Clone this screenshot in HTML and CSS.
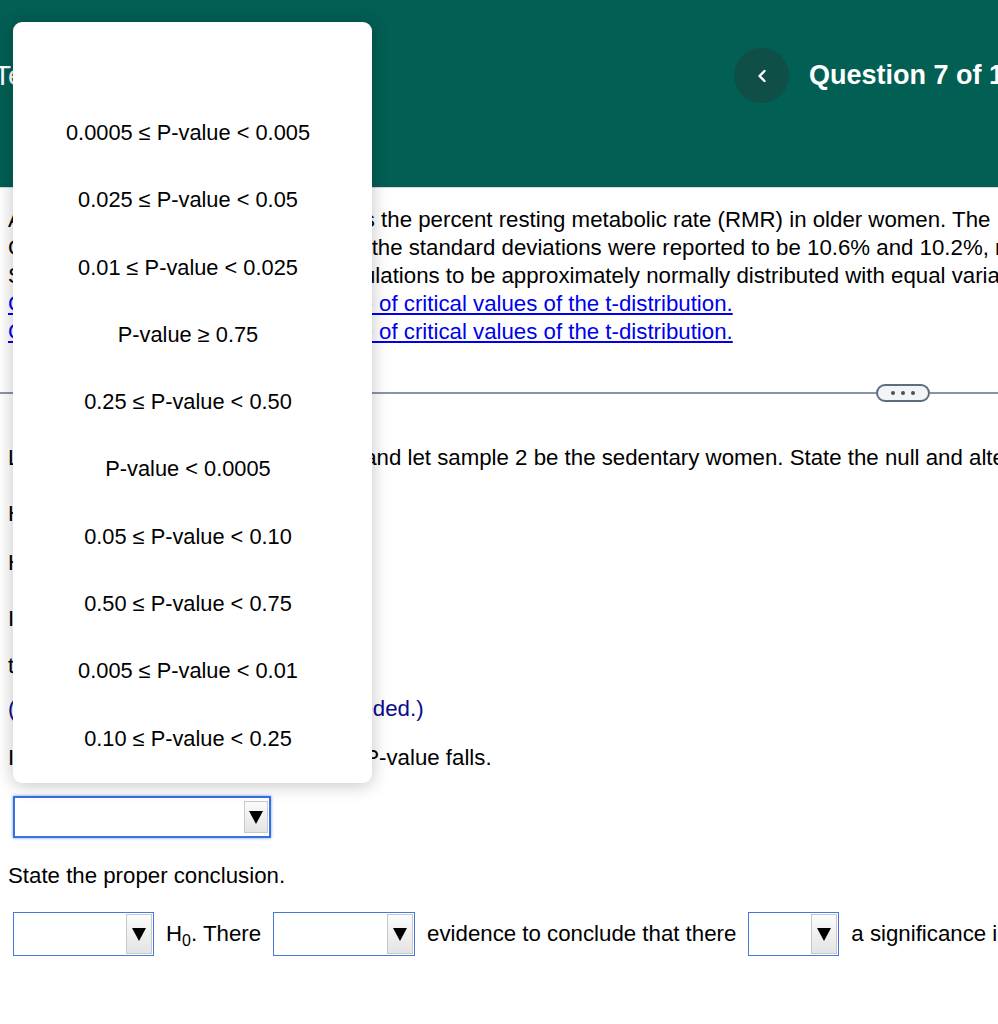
FILE: index.html
```html
<!DOCTYPE html>
<html lang="en">
<head>
<meta charset="utf-8">
<title>Question 7</title>
<link rel="stylesheet" href="styles.css">
</head>
<body>
<div class="page">
  <header class="topbar">
    <div class="title">Test Review</div>
    <nav class="qnav">
      <span class="back">
        <svg width="12" height="14" viewBox="0 0 12 14"><polyline points="8.5,2 3.5,7 8.5,12" fill="none" stroke="#fff" stroke-width="2.4" stroke-linecap="round" stroke-linejoin="round"/></svg>
      </span>
      <h1 class="qtitle">Question 7 of 10</h1>
    </nav>
  </header>

  <main class="content">
    <div class="prompt">
      <div class="line">A study looked at how training affects the percent resting metabolic rate (RMR) in older women. The</div>
      <div class="line">Group sizes were 14 and 12, and so the standard deviations were reported to be 10.6% and 10.2%, respectively.</div>
      <div class="line">Samples are small. Assume the populations to be approximately normally distributed with equal variances.</div>
      <div class="line"><a class="link" href="#">Click here to view page 1 of the table of critical values of the t-distribution.</a></div>
      <div class="line"><a class="link" href="#">Click here to view page 2 of the table of critical values of the t-distribution.</a></div>
    </div>

    <div class="divider">
      <span class="rule rule-left"></span>
      <span class="more"><i></i><i></i><i></i></span>
      <span class="rule rule-right"></span>
    </div>

    <div class="work">
      <div class="line">Let sample 1 be the active females, and let sample 2 be the sedentary women. State the null and alternative hypotheses.</div>
      <div class="line r-28">H<sub>0</sub>: μ<sub>1</sub> = μ<sub>2</sub></div>
      <div class="line r-21">H<sub>1</sub>: μ<sub>1</sub> ≠ μ<sub>2</sub></div>
      <div class="line r-28">Identify the test statistic.</div>
      <div class="line r-19">t = 1.31</div>
      <div class="line r-15 note">(Round to two decimal places as needed.)</div>
      <div class="line r-21">Identify the table range in which the P-value falls.</div>
      <div class="r-24">
        <span class="dd dd-focus"><span class="dd-btn"><span class="tri"></span></span></span>
      </div>
      <div class="line r-24">State the proper conclusion.</div>
      <div class="answer">
        <span class="dd dd-w140"><span class="dd-btn"><span class="tri"></span></span></span>
        <span>H<sub>0</sub>. There</span>
        <span class="dd dd-w141"><span class="dd-btn"><span class="tri"></span></span></span>
        <span>evidence to conclude that there</span>
        <span class="dd dd-w92"><span class="dd-btn"><span class="tri"></span></span></span>
        <span>a significance in the percent resting metabolic rate.</span>
      </div>
    </div>
  </main>

  <ul class="listbox">
    <li class="opt"></li>
    <li class="opt">0.0005 ≤ P-value &lt; 0.005</li>
    <li class="opt">0.025 ≤ P-value &lt; 0.05</li>
    <li class="opt">0.01 ≤ P-value &lt; 0.025</li>
    <li class="opt">P-value ≥ 0.75</li>
    <li class="opt">0.25 ≤ P-value &lt; 0.50</li>
    <li class="opt">P-value &lt; 0.0005</li>
    <li class="opt">0.05 ≤ P-value &lt; 0.10</li>
    <li class="opt">0.50 ≤ P-value &lt; 0.75</li>
    <li class="opt">0.005 ≤ P-value &lt; 0.01</li>
    <li class="opt">0.10 ≤ P-value &lt; 0.25</li>
  </ul>
</div>
</body>
</html>
```

FILE: styles.css
```css
html, body {
  margin: 0;
  padding: 0;
  background: #fff;
  overflow: hidden;
}
body {
  font-family: "Liberation Sans", Arial, sans-serif;
  color: #000;
}
.page {
  position: relative;
  width: 1400px;
  min-height: 1024px;
}

/* header */
.topbar {
  height: 188px;
  box-sizing: border-box;
  background: #025f54;
  border-bottom: 1px solid #d6d9d8;
  padding-top: 48px;
  display: flex;
  align-items: flex-start;
  color: #fff;
}
.title {
  flex: 0 0 740px;
  margin-left: -6px;
  font-size: 28px;
  line-height: 55px;
  white-space: nowrap;
}
.qnav {
  display: flex;
  align-items: center;
  gap: 20px;
}
.back {
  width: 55px;
  height: 55px;
  border-radius: 50%;
  background: #0f4f48;
  display: flex;
  align-items: center;
  justify-content: center;
}
.back svg { display: block; }
.qtitle {
  margin: 0;
  font-size: 27px;
  font-weight: bold;
  line-height: 55px;
  white-space: nowrap;
}

/* content */
.content {
  padding: 18px 0 0 8px;
  font-size: 22.25px;
}
.line {
  line-height: 28px;
  white-space: nowrap;
}
.link {
  color: #0000ee;
  text-decoration: underline;
}
.note { color: #0a0a8a; }
sub { font-size: 0.72em; line-height: 0; }

.divider {
  margin: 38px 0 0 -8px;
  height: 18px;
  display: flex;
  align-items: center;
}
.rule {
  height: 2px;
  background: #8995a4;
}
.rule-left { flex: 0 0 876px; }
.rule-right { flex: 1 1 auto; }
.more {
  box-sizing: border-box;
  width: 54px;
  height: 18px;
  border: 2px solid #5c6d7f;
  border-radius: 9px;
  background: #f2f4f6;
  display: flex;
  align-items: center;
  justify-content: center;
  gap: 6px;
}
.more i {
  width: 4px;
  height: 4px;
  border-radius: 50%;
  background: #4b5158;
}

.work { margin-top: 42px; }
.r-28 { margin-top: 28px; }
.r-21 { margin-top: 21px; }
.r-19 { margin-top: 19px; }
.r-15 { margin-top: 15px; }
.r-24 { margin-top: 24px; }

/* dropdowns */
.dd {
  box-sizing: border-box;
  display: inline-flex;
  justify-content: flex-end;
  height: 44px;
  padding: 1px;
  border: 1px solid #4677dc;
  background: #fff;
  vertical-align: middle;
}
.dd-btn {
  box-sizing: border-box;
  width: 26px;
  height: 100%;
  border: 1px solid #c9c9c9;
  background: linear-gradient(#fbfbfb, #e4e4e4);
  display: flex;
  align-items: center;
  justify-content: center;
}
.tri {
  width: 0;
  height: 0;
  border-left: 7px solid transparent;
  border-right: 7px solid transparent;
  border-top: 13px solid #000;
}
.dd-focus {
  margin-left: 5px;
  width: 258px;
  height: 42px;
  padding: 3px 1px 3px 3px;
  border: 2px solid #3a6fe0;
  box-shadow: 0 0 3px rgba(58, 111, 224, 0.7);
}
.dd-focus .dd-btn { width: 24px; }
.dd-w140 { width: 141px; }
.dd-w141 { width: 142px; }
.dd-w92 { width: 91px; }

.answer {
  margin: 22px 0 0 5px;
  display: flex;
  align-items: center;
  gap: 12px;
  white-space: nowrap;
}

/* open list */
.listbox {
  position: absolute;
  left: 13px;
  top: 22px;
  width: 359px;
  height: 761px;
  box-sizing: border-box;
  margin: 0;
  padding: 10px 9px 10px 0;
  list-style: none;
  background: #fff;
  border-radius: 9px;
  box-shadow: 0 2px 18px rgba(0, 0, 0, 0.24);
}
.opt {
  height: 67.3px;
  display: flex;
  align-items: center;
  justify-content: center;
  font-size: 21.8px;
  white-space: nowrap;
}
```
